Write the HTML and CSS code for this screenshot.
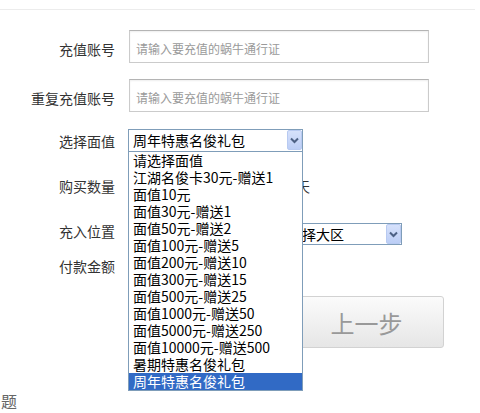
FILE: index.html
```html
<!DOCTYPE html>
<html lang="zh-CN">
<head>
<meta charset="utf-8">
<title>充值</title>
<link rel="stylesheet" href="styles.css">
</head>
<body>
<div class="page">
  <div class="topline"></div>
  <form class="form">
    <div class="row row-acc">
      <label class="lbl lbl-acc">充值账号</label>
      <input class="txt" type="text" placeholder="请输入要充值的蜗牛通行证">
    </div>
    <div class="row row-acc row-acc2">
      <label class="lbl lbl-acc">重复充值账号</label>
      <input class="txt" type="text" placeholder="请输入要充值的蜗牛通行证">
    </div>
    <div class="row row-face">
      <label class="lbl">选择面值</label>
      <div class="selwrap">
        <div class="sel sel-face">
          <span class="sel-text">周年特惠名俊礼包</span>
          <span class="sel-arrow"><svg width="13" height="18" viewBox="0 0 13 18"><path d="M3 7.5 L6.5 11 L10 7.5" fill="none" stroke="#4d6185" stroke-width="2"/></svg></span>
        </div>
        <div class="dd">
          <div class="dd-item">请选择面值</div>
          <div class="dd-item">江湖名俊卡30元-赠送1</div>
          <div class="dd-item">面值10元</div>
          <div class="dd-item">面值30元-赠送1</div>
          <div class="dd-item">面值50元-赠送2</div>
          <div class="dd-item">面值100元-赠送5</div>
          <div class="dd-item">面值200元-赠送10</div>
          <div class="dd-item">面值300元-赠送15</div>
          <div class="dd-item">面值500元-赠送25</div>
          <div class="dd-item">面值1000元-赠送50</div>
          <div class="dd-item">面值5000元-赠送250</div>
          <div class="dd-item">面值10000元-赠送500</div>
          <div class="dd-item">暑期特惠名俊礼包</div>
          <div class="dd-item on">周年特惠名俊礼包</div>
        </div>
      </div>
    </div>
    <div class="row row-qty">
      <label class="lbl">购买数量</label>
      <input class="txt txt-qty" type="text">
      <span class="unit">天</span>
    </div>
    <div class="row row-pos">
      <label class="lbl">充入位置</label>
      <div class="sel sel-game">
        <span class="sel-text"></span>
        <span class="sel-arrow"><svg width="13" height="18" viewBox="0 0 13 18"><path d="M3 7.5 L6.5 11 L10 7.5" fill="none" stroke="#4d6185" stroke-width="2"/></svg></span>
      </div>
      <div class="sel sel-area">
        <span class="sel-text">请选择大区</span>
        <span class="sel-arrow"><svg width="13" height="18" viewBox="0 0 13 18"><path d="M3 7.5 L6.5 11 L10 7.5" fill="none" stroke="#4d6185" stroke-width="2"/></svg></span>
      </div>
    </div>
    <div class="row row-pay">
      <label class="lbl">付款金额</label>
    </div>
    <div class="btnrow">
      <button type="button" class="btn btn-ok"></button>
      <button type="button" class="btn">上一步</button>
    </div>
  </form>
  <div class="faq">题</div>
</div>
</body>
</html>
```

FILE: styles.css
```css
html, body {
  margin: 0;
  padding: 0;
  background: #fff;
}

body {
  font-family: "Noto Sans CJK SC", "Liberation Sans", sans-serif;
  color: #333;
}

.page {
  width: 480px;
  height: 413px;
  overflow: hidden;
}

.topline {
  height: 9px;
  width: 475px;
  border-bottom: 1px solid #ececec;
}

.form {
  padding-top: 20px;
}

.row {
  display: flex;
  align-items: center;
}

.lbl {
  flex: none;
  width: 115px;
  margin-right: 14px;
  text-align: right;
  font-size: 14px;
  line-height: 16px;
  color: #333;
}

.lbl-acc {
  padding-top: 4px;
}

.row-acc {
  height: 33px;
}

.row-acc2 {
  margin-top: 16px;
}

.txt {
  box-sizing: border-box;
  width: 300px;
  height: 33px;
  margin: 0;
  padding: 4px 6px 0;
  border: 1px solid #cbcbcb;
  border-top-color: #b4b4b4;
  box-shadow: inset 0 1px 2px rgba(0, 0, 0, 0.07);
  font-family: inherit;
  font-size: 12px;
  color: #333;
  background: #fff;
  outline: none;
}

.txt::placeholder {
  color: #9a9a9a;
}

.row-face {
  margin-top: 17px;
  height: 23px;
  align-items: flex-start;
}

.row-face .lbl {
  padding-top: 4px;
}

.selwrap {
  position: relative;
  margin-left: -1px;
}

.sel {
  box-sizing: border-box;
  height: 23px;
  display: flex;
  align-items: flex-start;
  border: 1px solid #7f9db9;
  background: #fff;
  font-size: 14px;
  color: #000;
}

.sel-text {
  flex: 1;
  padding-left: 4px;
  line-height: 21px;
  white-space: nowrap;
  overflow: hidden;
}

.sel-arrow {
  flex: none;
  box-sizing: border-box;
  width: 15px;
  height: 20px;
  border: 1px solid #b8caf1;
  border-radius: 2px;
  background: linear-gradient(#d6e1fb, #bccef6);
  display: flex;
}

.sel-arrow svg {
  display: block;
}

.sel-face {
  width: 175px;
}

.dd {
  position: absolute;
  left: 0;
  top: 22px;
  z-index: 10;
  box-sizing: border-box;
  width: 175px;
  border: 1px solid #7f9db9;
  background: #fff;
}

.dd-item {
  height: 17px;
  line-height: 17px;
  padding-left: 4px;
  font-size: 14px;
  color: #000;
  white-space: nowrap;
}

.dd-item.on {
  background: #316ac5;
  color: #fff;
}

.row-qty {
  margin-top: 17px;
  height: 33px;
}

.txt-qty {
  width: 160px;
}

.unit {
  margin-left: 7px;
  font-size: 14px;
  line-height: 16px;
  color: #333;
}

.row-pos {
  margin-top: 21px;
  height: 22px;
  align-items: flex-start;
}

.sel-game {
  width: 132px;
  height: 22px;
}

.sel-area {
  width: 133px;
  height: 22px;
  margin-left: 8px;
}

.row-pay {
  margin-top: 13px;
  height: 16px;
}

.btnrow {
  display: flex;
  gap: 10px;
  margin-top: 22px;
  padding-left: 129px;
}

.btn {
  box-sizing: border-box;
  width: 155px;
  height: 52px;
  margin: 0;
  padding: 0;
  border: 1px solid #d2d2d2;
  border-radius: 3px;
  background: linear-gradient(#fbfbfb, #e6e6e6);
  font-family: inherit;
  font-size: 24px;
  color: #999;
}

.btn-ok {
  width: 150px;
}

.faq {
  margin-top: 43px;
  padding-left: 1px;
  font-size: 16px;
  line-height: 20px;
  color: #666;
}
```
